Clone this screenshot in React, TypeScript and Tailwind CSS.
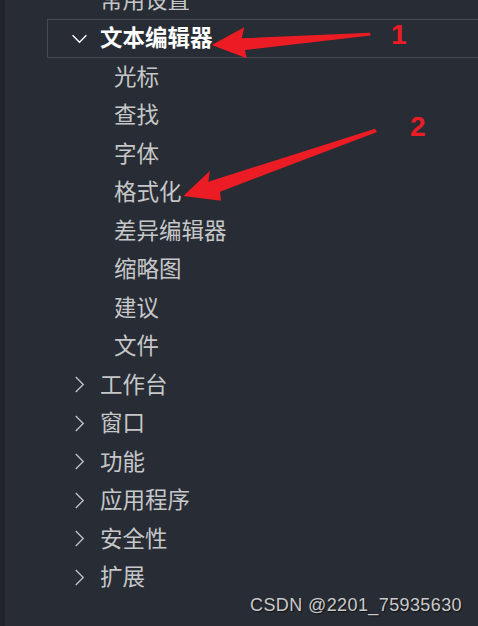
import React from "react";

type Item = { label: string; level: 1 | 2; open?: boolean; active?: boolean };

const items: Item[] = [
  { label: "常用设置", level: 1 },
  { label: "文本编辑器", level: 1, open: true, active: true },
  { label: "光标", level: 2 },
  { label: "查找", level: 2 },
  { label: "字体", level: 2 },
  { label: "格式化", level: 2 },
  { label: "差异编辑器", level: 2 },
  { label: "缩略图", level: 2 },
  { label: "建议", level: 2 },
  { label: "文件", level: 2 },
  { label: "工作台", level: 1 },
  { label: "窗口", level: 1 },
  { label: "功能", level: 1 },
  { label: "应用程序", level: 1 },
  { label: "安全性", level: 1 },
  { label: "扩展", level: 1 },
];

function Chevron({ open }: { open?: boolean }) {
  return (
    <svg width="17" height="17" viewBox="0 0 16 16" fill="none" stroke={open ? "#ffffff" : "#bfc1c5"} strokeWidth="1.3">
      {open ? <path d="M1.5 5 L8 11.5 L14.5 5" /> : <path d="M4.5 1 L11.5 8 L4.5 15" />}
    </svg>
  );
}

function Row({ item, first }: { item: Item; first?: boolean }) {
  return (
    <div
      className={
        "flex h-[38.5px] items-center " +
        (first ? "-mt-[19.5px] " : "") +
        (item.active ? "border border-r-0 border-[#444955]" : "border border-transparent")
      }
    >
      {item.level === 1 ? (
        <>
          <div className="ml-[23px] flex w-[17px] items-center justify-center">
            {item.label !== "常用设置" && <Chevron open={item.open} />}
          </div>
          <span
            className={
              "ml-[12px] -translate-y-[2px] text-[22.5px] leading-none " +
              (item.active ? "font-bold text-white" : "text-[#c6c7c9]")
            }
          >
            {item.label}
          </span>
        </>
      ) : (
        <span className="ml-[66px] -translate-y-[2px] text-[22.5px] leading-none text-[#c6c7c9]">{item.label}</span>
      )}
    </div>
  );
}

export default function App() {
  return (
    <div
      className="relative flex h-[626px] w-[478px] overflow-hidden bg-[#282c34]"
      style={{ fontFamily: '"Noto Sans CJK SC", "Noto Sans", sans-serif' }}
    >
      <div className="w-[5px] shrink-0 bg-[#21252b]" />
      <div className="ml-[42px] flex flex-1 flex-col">
        {items.map((it, i) => (
          <Row key={it.label} item={it} first={i === 0} />
        ))}
      </div>

      {/* 红色标注箭头 */}
      <svg className="pointer-events-none absolute inset-0" width="478" height="626" viewBox="0 0 478 626">
        <polygon points="211.7,45 244.3,27.3 241.7,38.3 370,32.8 370.8,35.5 245,50 246.7,58.3" fill="#ec1c24" />
        <polygon points="183.3,196 210,170.7 208.3,181.7 375,128.8 377,132 220,191.7 221,200.7" fill="#ec1c24" />
      </svg>
      <span
        className="absolute left-[391px] top-[21px] text-[28px] font-bold leading-none text-[#ec1c24]"
        style={{ fontFamily: '"Liberation Sans", Arial, sans-serif' }}
      >
        1
      </span>
      <span
        className="absolute left-[410px] top-[113px] text-[28px] font-bold leading-none text-[#ec1c24]"
        style={{ fontFamily: '"Liberation Sans", Arial, sans-serif' }}
      >
        2
      </span>

      <span
        className="absolute left-[250px] top-[596px] text-[18px] leading-none tracking-[0.4px] text-[#c9cacc]"
        style={{ fontFamily: '"Liberation Sans", Arial, sans-serif', textShadow: "1px 1px 1px #111" }}
      >
        CSDN @2201_75935630
      </span>
    </div>
  );
}
